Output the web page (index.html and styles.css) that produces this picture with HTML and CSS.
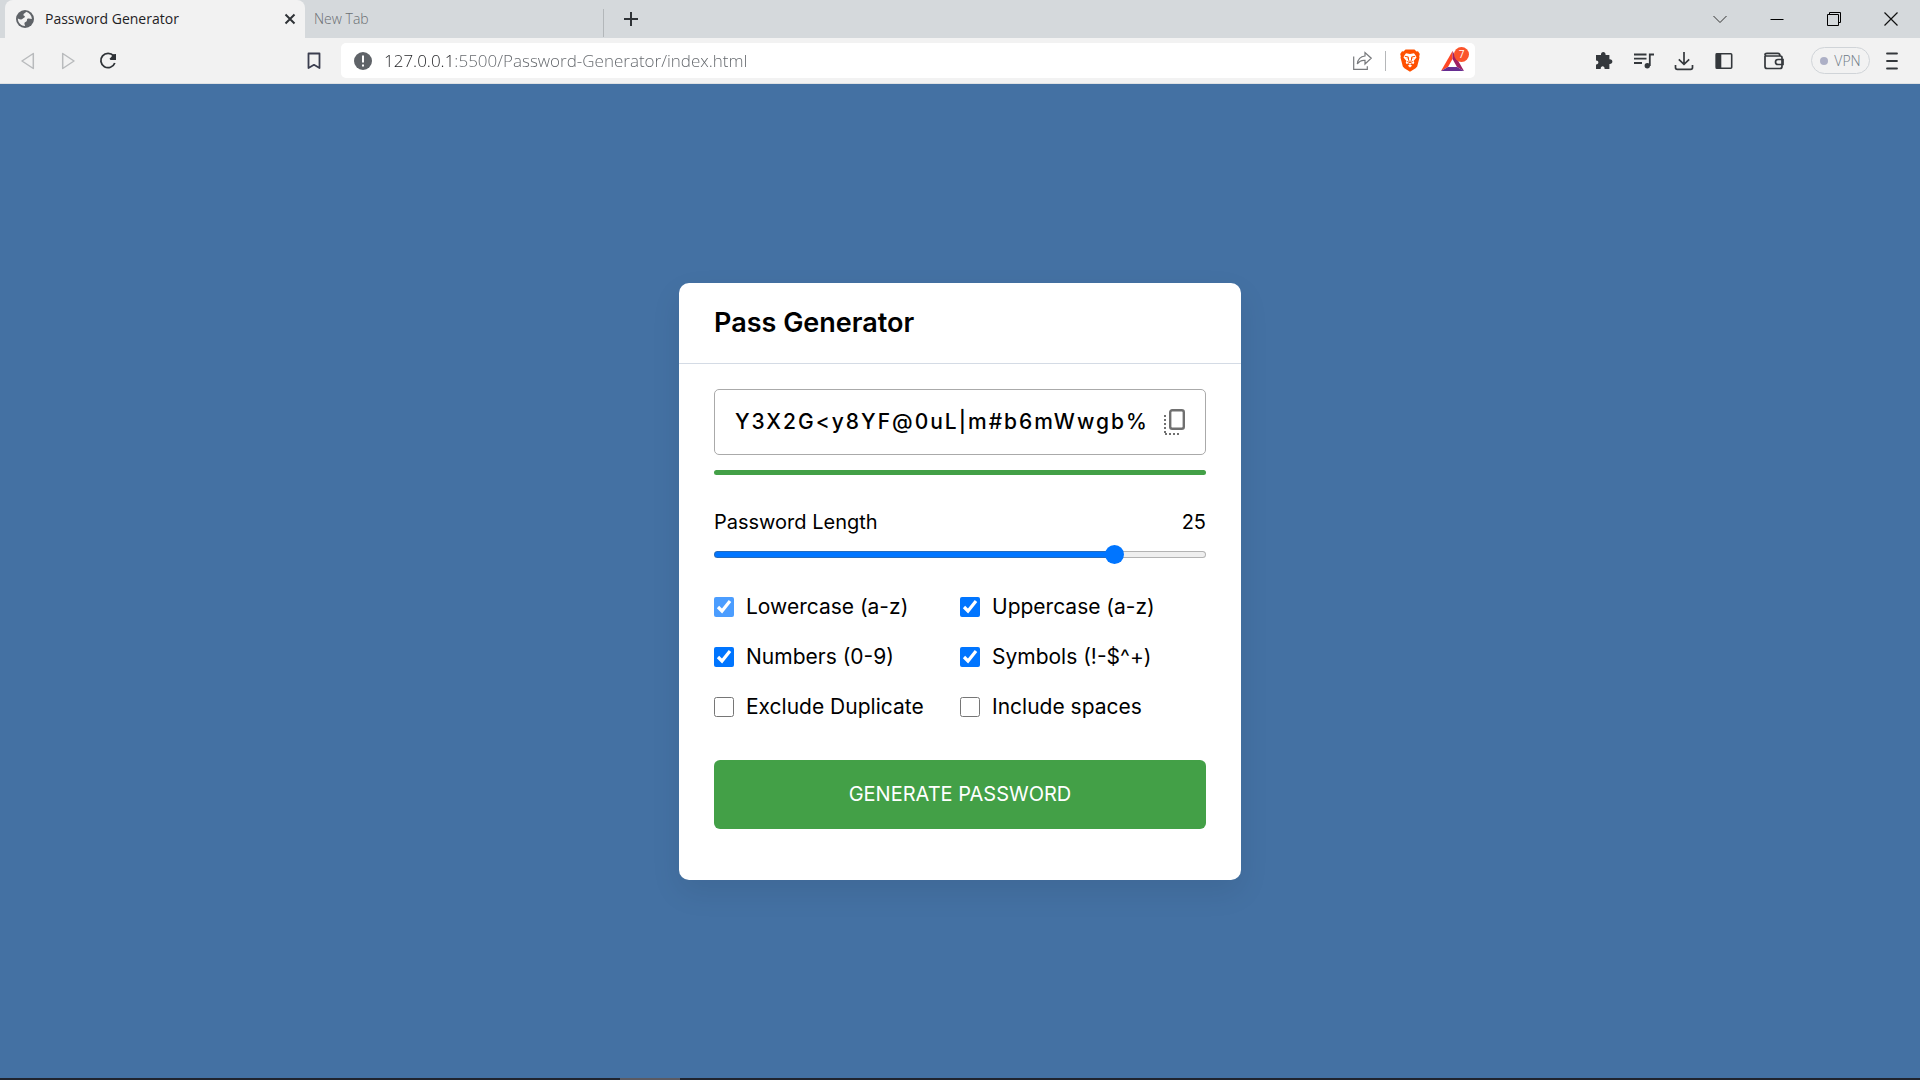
FILE: index.html
```html
<!DOCTYPE html>
<html lang="en">
<head>
<meta charset="utf-8">
<title>Password Generator</title>
<link rel="stylesheet" href="styles.css">
</head>
<body>
<div class="browser">
  <header class="tabstrip">
    <div class="tab tab-active">
      <svg class="favicon" width="18" height="18" viewBox="0 0 18 18"><circle cx="9" cy="9" r="9" fill="#5f6368"/><path d="M10 1.8c-.5 1.6-2.4 1.4-2.6 2.9-.1 1.2 1.3.7 1.5 1.9.2 1.500-1.700 1.300-2.300 2.200-.8 1.100-2.600.8-4.800-.2.1 4.200 3.200 7.400 7.200 7.500.1-1.400-.9-1.900-.5-3.200.4-1.200 1.800-.8 2.300-1.900.4-1-.2-1.500.7-2.200 1-.8 2.500-.1 4.400.2-.2-3.400-2.400-6.200-5.900-7.200z" fill="#f2f2f2"/></svg>
      <span class="tab-title">Password Generator</span>
      <button class="tab-close" aria-label="Close tab"><svg width="12" height="12" viewBox="0 0 12 12" fill="none" stroke="#2f3337" stroke-width="2"><path d="M1.500 1.500l9 9M10.500 1.500l-9 9"/></svg></button>
    </div>
    <div class="tab tab-idle"><span class="tab-title">New Tab</span></div>
    <button class="new-tab" aria-label="New tab"><svg width="16" height="16" viewBox="0 0 16 16" fill="none" stroke="#2f3337" stroke-width="2"><path d="M8 1v14M1 8h14"/></svg></button>
    <div class="window-controls">
      <button aria-label="Search tabs"><svg width="14" height="14" viewBox="0 0 14 14" fill="none" stroke="#333"><path d="M.5 4L7 10.500 13.500 4"/></svg></button>
      <button aria-label="Minimize"><svg width="14" height="14" viewBox="0 0 14 14" fill="none" stroke="#000"><path d="M.5 7.500h13"/></svg></button>
      <button aria-label="Restore"><svg width="14" height="14" viewBox="0 0 14 14" fill="none" stroke="#000"><path d="M.5 2.500h11v11H.5zM2.500 2.500v-2h11v10h-2"/></svg></button>
      <button aria-label="Close"><svg width="14" height="14" viewBox="0 0 14 14" fill="none" stroke="#111" stroke-width="1.200"><path d="M.5.5l13 13M13.500.5l-13 13"/></svg></button>
    </div>
  </header>
  <nav class="toolbar">
    <div class="nav-group">
      <button aria-label="Back"><svg width="18" height="18" viewBox="0 0 18 18" fill="none" stroke="#b9bbbd" stroke-width="1.500" stroke-linejoin="round"><path d="M14.300 1.500v15L3 9z"/></svg></button>
      <button aria-label="Forward"><svg width="18" height="18" viewBox="0 0 18 18" fill="none" stroke="#b9bbbd" stroke-width="1.500" stroke-linejoin="round"><path d="M3.700 1.500v15L15 9z"/></svg></button>
      <button aria-label="Reload"><svg width="18" height="18" viewBox="0 0 18 18" fill="none"><path d="M14.600 3.900A7.200 7.200 0 1 0 15.800 11" stroke="#2f3337" stroke-width="1.800"/><path d="M17 2v6h-5.500l-1-1.300 1.800-1.700L14 2.300z" fill="#2f3337"/></svg></button>
      <button class="bookmark" aria-label="Bookmark"><svg width="18" height="18" viewBox="0 0 18 18" fill="none" stroke="#3b3e4f" stroke-width="1.800" stroke-linejoin="round"><path d="M3.500 1.500h11v14.500L9 12.800 3.500 16z"/></svg></button>
    </div>
    <div class="address">
      <svg width="18" height="18" viewBox="0 0 18 18"><circle cx="9" cy="9" r="9" fill="#5f6368"/><path d="M9 3.500V10.500M9 12.500v2" stroke="#fff" stroke-width="2"/></svg>
      <input class="url" type="text" aria-label="Address" value="127.0.0.1:5500/Password-Generator/index.html">
      <button class="share" aria-label="Share"><svg width="19" height="19" viewBox="0 0 19 19" fill="none" stroke="#77797c" stroke-width="1.200"><path d="M.7 5.500v12.800h13.600v-3"/><path d="M12 5V1.500l6.200 5.700L12 13V9.400C8.500 9 6 10.500 4.300 13 4.800 8.500 7.500 5.400 12 5z"/></svg></button>
      <span class="divider"></span>
      <button class="shields" aria-label="Shields"><svg width="20" height="23" viewBox="0 0 20 23"><path d="M5.500.5h9l2 2 1.500-.3L19.800 5l-.6 2.200.3 1.400-2.300 8.800-1.600 1.900L10 22.700l-5.600-3.400-1.600-1.900L.5 8.600l.3-1.400L.2 5 2 2.200l1.500.3z" fill="#ff5000"/><path d="M6 4.300l4 .8 4-.8 1.800 2.400.7 1.700-3 3.700.8 1.400-.8 1.500-2.100-.8-1.400 1 2.100 1.500L10 18.400l-2.100-1.700L10 15.200l-1.400-1-2.100.8-.8-1.500.8-1.400-3-3.700.7-1.700z" fill="#fff"/><path d="M4.800 7.300l3.700.7-1.300 1.500M15.200 7.300l-3.700.7 1.300 1.500M8.500 8.500v2.600L10 12.700l1.500-1.600V8.500M7.200 12.500l2.800 1.200 2.800-1.200" fill="none" stroke="#ff5000" stroke-width="1"/></svg></button>
      <button class="rewards" aria-label="Rewards">
        <svg width="23" height="20" viewBox="0 0 23 20"><path d="M11.500 0L0 20l7-4 4.500-8z" fill="#ff4724"/><path d="M11.500 0L23 20l-7-4-4.500-8z" fill="#9e1f63"/><path d="M0 20h23l-7-4H7z" fill="#662d91"/></svg>
        <span class="badge">7</span>
      </button>
    </div>
    <div class="tools">
      <button aria-label="Extensions"><svg width="20" height="20" viewBox="0 0 20 20"><path d="M7 4c-.5-4 5-4 4.600 0h3.800v4.300c4-.5 4 5 0 4.600V18h-4.800c.3-3.600-4.200-3.600-3.900 0H2v-4.600c3.200.2 3.200-4 0-3.900V4z" fill="#34383c"/></svg></button>
      <button aria-label="Media"><svg width="20" height="18" viewBox="0 0 20 18" fill="none" stroke="#34383c" stroke-width="1.800"><path d="M0 2.500h12.500M0 6.700h12.500M0 11h8M15.800 14V2.500H20"/><circle cx="13.300" cy="13.800" r="2.700" fill="#34383c" stroke="none"/></svg></button>
      <button aria-label="Downloads"><svg width="20" height="20" viewBox="0 0 20 20" fill="none" stroke="#34383c" stroke-width="1.700"><path d="M10 1v12M4.800 8.300l5.200 5 5.200-5M1.500 14v2.500q0 1.800 1.800 1.800h13.400q1.800 0 1.800-1.800V14"/></svg></button>
      <button aria-label="Sidebar"><svg width="18" height="18" viewBox="0 0 18 18" fill="none" stroke="#34383c" stroke-width="1.600"><rect x="1.300" y="1.800" width="15.400" height="14.400" rx="1"/><path d="M1.500 2h4v14h-4z" fill="#34383c"/></svg></button>
      <button class="wallet" aria-label="Wallet"><svg width="20" height="18" viewBox="0 0 20 18" fill="none" stroke="#34383c" stroke-width="1.700"><path d="M1 4v10.500q0 2 2 2h13q2 0 2-2V5.500q0-1.500-2-1.500H2.500Q1 4 1 2.700 1 1.300 3 1.300h11q2 0 2 2.700"/><path d="M19 7.500h-5a2.500 2.500 0 0 0 0 5h5z"/></svg></button>
      <button class="vpn"><span class="dot"></span>VPN</button>
      <button aria-label="Menu"><svg width="12" height="18" viewBox="0 0 12 18" stroke="#34383c" stroke-width="1.800" stroke-linecap="round"><path d="M1 1.500h10M1 9h10M1 16.500h10"/></svg></button>
    </div>
  </nav>
  <main class="page">
    <form class="card">
      <h1 class="card-title">Pass Generator</h1>
      <div class="card-body">
        <div class="password-box">
          <input class="password" type="text" readonly aria-label="Generated password" value="Y3X2G&lt;y8YF@0uL|m#b6mWwgb%">
          <button class="copy" type="button" aria-label="Copy password"><svg width="22" height="26" viewBox="0 0 22 26" fill="none" stroke="#707070"><rect x="6.200" y="1.200" width="13.600" height="18.600" rx="2" stroke-width="2.400"/><path d="M1 6v19M1 25h15" stroke-width="2" stroke-dasharray="2 2"/></svg></button>
        </div>
        <div class="strength"></div>
        <div class="length-row"><label for="length">Password Length</label><output for="length">25</output></div>
        <input class="length" id="length" type="range" min="1" max="30" value="25" style="--fill: 82%">
        <div class="options">
          <label class="option locked"><input type="checkbox" checked>Lowercase (a-z)</label>
          <label class="option"><input type="checkbox" checked>Uppercase (a-z)</label>
          <label class="option"><input type="checkbox" checked>Numbers (0-9)</label>
          <label class="option"><input type="checkbox" checked>Symbols (!-$^+)</label>
          <label class="option"><input type="checkbox">Exclude Duplicate</label>
          <label class="option"><input type="checkbox">Include spaces</label>
        </div>
        <button class="generate" type="button">GENERATE PASSWORD</button>
      </div>
    </form>
  </main>
  <footer class="taskbar"></footer>
</div>
</body>
</html>
```
FILE: styles.css
```css
* { box-sizing: border-box; margin: 0; padding: 0; }
body { font-family: "Open Sans", "Noto Sans", sans-serif; color: #34383c; }
button { border: 0; background: none; font: inherit; color: inherit; display: flex; align-items: center; justify-content: center; flex: none; }
input { font: inherit; color: inherit; }
svg { display: block; flex: none; }

.browser { min-height: 100vh; display: flex; flex-direction: column; }

.tabstrip { height: 38px; background: #d5d9dc; display: flex; padding: 0 1px 1px 5px; }
.tab { display: flex; align-items: center; font-size: 14px; }
.tab-active { width: 300px; height: 38px; padding: 0 4px 1px 11px; gap: 11px; background: #f2f2f2; border-radius: 8px 8px 0 0; }
.tab-active .tab-title { flex: 1; font-weight: 400; color: #1f2225; }
.tab-close { width: 22px; height: 22px; }
.tab-idle { width: 299px; padding-left: 9px; color: #6a6e72; font-weight: 300; background: linear-gradient(#b3b7ba, #b3b7ba) right bottom / 1px 28px no-repeat; }
.new-tab { width: 54px; }
.window-controls { display: flex; margin-left: auto; }
.window-controls button { width: 57px; }

.toolbar { height: 46px; background: #f2f2f2; border-bottom: 1px solid #dfe1e3; display: grid; grid-template-columns: 341px 1fr 445px; align-items: center; }
.nav-group { display: flex; padding: 0 7px 0 8px; }
.nav-group button, .tools button { width: 40px; height: 34px; }
.nav-group .bookmark { margin-left: auto; }
.address { height: 35px; background: #fff; border-radius: 5px; display: flex; align-items: center; padding: 0 1px 0 13px; }
.url { flex: 1; min-width: 0; margin-left: 12px; border: 0; outline: 0; font-size: 17px; font-weight: 300; color: #5f6368; background: linear-gradient(90deg, #202124 71px, #5f6368 71px); background-clip: text; -webkit-text-fill-color: transparent; }
.share { width: 38px; height: 30px; }
.divider { width: 1px; height: 20px; margin: 0 4px; background: #b5b7b9; }
.shields { width: 40px; height: 30px; }
.rewards { position: relative; width: 44px; height: 30px; }
.badge { position: absolute; top: 1px; right: 5px; width: 15px; height: 15px; border-radius: 8px; background: #fb542b; color: #fff; font-size: 10px; line-height: 15px; text-align: center; }
.tools { display: flex; align-items: center; justify-content: flex-end; padding-right: 8px; }
.tools .wallet { margin: 0 17px 0 10px; }
.tools .vpn { width: 59px; height: 27px; margin-right: 2px; gap: 6px; border: 1px solid #d0d4d8; border-radius: 14px; font-size: 14px; font-weight: 300; color: #6f7a85; }
.dot { width: 8px; height: 8px; border-radius: 50%; background: #adb0c6; }

.page { flex: 1; display: flex; align-items: center; justify-content: center; background: #4471a3; color: #000; font-family: Inter, sans-serif; }
.card { width: 100%; max-width: 562px; background: #fff; border-radius: 10px; box-shadow: 0 12px 31px rgba(0, 0, 0, 0.08); }
.card-title { padding: 22px 35px; border-bottom: 1px solid #d4dbe5; font-size: 27px; line-height: 36px; font-weight: 600; }
.card-body { padding: 25px 35px 51px; font-size: 20px; line-height: 30px; }
.password-box { display: flex; align-items: center; height: 66px; padding: 0 9px 0 20px; border: 1px solid #aaa; border-radius: 5px; }
.password { flex: 1; min-width: 0; border: 0; outline: 0; font-size: 21px; font-weight: 500; letter-spacing: 2px; }
.copy { width: 42px; height: 42px; }
.strength { height: 5px; margin-top: 15px; border-radius: 4px; background: #43a047; }
.length-row { display: flex; justify-content: space-between; margin-top: 32px; }

.length { display: block; width: 100%; height: 20px; margin-top: 8px; appearance: none; background: none; }
.length::-webkit-slider-runnable-track { height: 7px; border: 1px solid #b2b2b2; border-radius: 4px; background: linear-gradient(90deg, #0075ff var(--fill), #efefef var(--fill)); background-origin: border-box; border-color: rgba(90, 90, 90, 0.4); }
.length::-webkit-slider-thumb { appearance: none; width: 19px; height: 19px; margin-top: -7px; border-radius: 50%; background: #0075ff; }

.options { display: grid; grid-template-columns: 1fr 1fr; row-gap: 20px; margin-top: 27px; font-size: 21px; }
.option { display: flex; align-items: center; gap: 12px; white-space: nowrap; }
.option input { width: 20px; height: 20px; flex: none; }
.locked input { opacity: 0.7; }
.generate { width: 100%; height: 69px; margin-top: 38px; border-radius: 6px; background: #43a047; color: #fff; font-size: 20px; }

.taskbar { height: 2px; background: #20242e linear-gradient(#5a5a62, #5a5a62) 620px 0 / 60px 2px no-repeat; }
```
